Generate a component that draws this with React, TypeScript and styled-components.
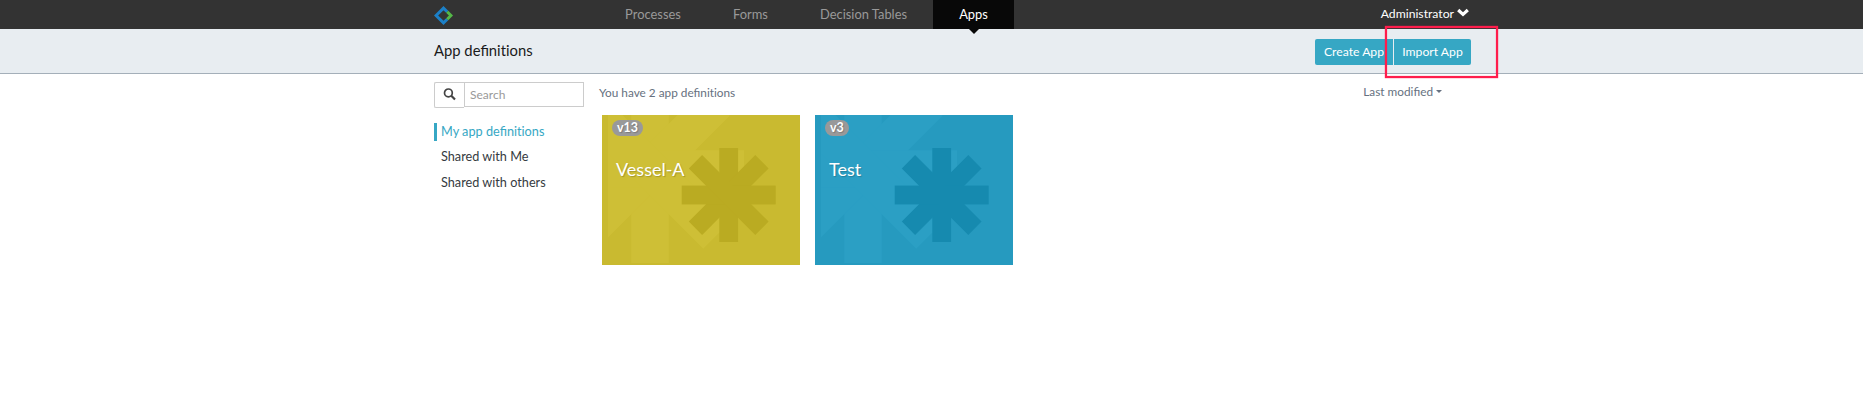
import React from "react";
import styled, { createGlobalStyle } from "styled-components";

const GlobalStyle = createGlobalStyle`
  * { box-sizing: border-box; }
  body {
    margin: 0;
    background: #fff;
    color: #333;
    font: 14px/20px Lato, "Liberation Sans", sans-serif;
  }
  button, input { font: inherit; }
`;

const Page = styled.div`
  position: relative;
  min-height: 402px;
`;

const Container = styled.div`
  width: 1037px;
  height: 100%;
  margin-left: 434px;
  display: flex;
`;

const TopBar = styled.header`
  height: 29px;
  background: #333;
`;

const Logo = styled.svg`
  width: 22px;
  height: 22px;
  margin: 5px 143px 0 0;
`;

const Nav = styled.nav`
  display: flex;
`;

const NavItem = styled.a<{ $width: number; $active?: boolean }>`
  position: relative;
  width: ${(p) => p.$width}px;
  height: 29px;
  line-height: 29px;
  text-align: center;
  font-size: 12.9px;
  color: ${(p) => (p.$active ? "#fff" : "#999")};
  background: ${(p) => (p.$active ? "#080808" : "transparent")};

  &::after {
    content: "";
    display: ${(p) => (p.$active ? "block" : "none")};
    position: absolute;
    top: 29px;
    left: calc(50% - 5px);
    border: 5px solid transparent;
    border-top-color: #080808;
    border-bottom: 0;
  }
`;

const Account = styled.div`
  display: flex;
  margin-left: auto;
  padding-right: 2px;
  font-size: 12.2px;
  line-height: 28px;
  color: #fff;
  gap: 3px;

  svg { margin-top: 8px; }
`;

const SubBar = styled.div`
  height: 45px;
  background: #e8edf1;
  border-bottom: 1px solid #a4afb9;
`;

const Title = styled.h2`
  margin: 0;
  font-size: 14.8px;
  font-weight: 400;
  line-height: 43px;
  color: #1a1a1a;
`;

const Plain = styled.span`
  font-variant-ligatures: none;
`;

const ButtonGroup = styled.div`
  display: flex;
  gap: 1px;
  margin: 10px 0 0 auto;
`;

const Button = styled.button<{ $side: "left" | "right" }>`
  width: ${(p) => (p.$side === "left" ? 78 : 77)}px;
  height: 26px;
  padding: 0;
  border: 0;
  border-radius: ${(p) => (p.$side === "left" ? "2px 0 0 2px" : "0 2px 2px 0")};
  background: #36a7c4;
  color: #fff;
  font-size: 12.2px;
`;

const Sidebar = styled.aside`
  width: 150px;
  padding-top: 8px;
`;

const SearchBox = styled.div`
  display: flex;
  height: 26px;
`;

const SearchIcon = styled.span`
  width: 30px;
  height: 26px;
  padding: 5px 0 0 8px;
  border: 1px solid #ccc;
  border-right: 0;
  border-radius: 2px 0 0 2px;

  svg { display: block; }
`;

const SearchInput = styled.input`
  flex: 1;
  min-width: 0;
  height: 25px;
  padding: 0 5px;
  border: 1px solid #ccc;
  font-size: 12px;
  outline: 0;

  &::placeholder { color: #999; opacity: 1; }
`;

const Filters = styled.ul`
  margin: 15px 0 0;
  padding: 0;
  list-style: none;
`;

const Filter = styled.li<{ $active?: boolean }>`
  height: 18px;
  margin-bottom: ${(p) => (p.$active ? 7 : 8)}px;
  padding-left: ${(p) => (p.$active ? 4 : 7)}px;
  border-left: ${(p) => (p.$active ? "3px solid #36a7c4" : "0")};
  font-size: 12.7px;
  line-height: 17px;
  color: ${(p) => (p.$active ? "#36a7c4" : "#363b41")};
`;

const Main = styled.main`
  flex: 1;
  padding: 9px 0 0 15px;
`;

const Summary = styled.div`
  display: flex;
  justify-content: space-between;
  height: 32px;
  padding-right: 29px;
  font-size: 11.8px;
  line-height: 19px;
  color: #667180;
`;

const Sort = styled.span`
  display: flex;
  align-items: center;
  height: 17px;
  gap: 3px;

  &::after {
    content: "";
    border: 3px solid transparent;
    border-top-color: currentColor;
    border-bottom: 0;
  }
`;

const Cards = styled.div`
  display: flex;
  gap: 15px;
  padding-left: 3px;
`;

const Card = styled.article<{ $color: string }>`
  position: relative;
  width: 198px;
  height: 150px;
  padding: 5px 10px;
  background: ${(p) => p.$color};
  color: #fff;
`;

const CardArt = styled.svg`
  position: absolute;
  inset: 0;
`;

const Badge = styled.span`
  position: relative;
  display: block;
  width: fit-content;
  height: 16px;
  padding: 0 5px;
  border-radius: 8px;
  background: #999;
  font-size: 12.4px;
  font-weight: 700;
  line-height: 16px;
  text-shadow: 1px 1px 1px rgba(0, 0, 0, 0.2);
`;

const CardTitle = styled.h3`
  position: relative;
  margin: 21px 4px 0;
  font-size: 18px;
  font-weight: 400;
  line-height: 24px;
  text-shadow: 1px 1px 1px rgba(0, 0, 0, 0.2);
`;

const Highlight = styled.div`
  position: absolute;
  left: 1385px;
  top: 26px;
  width: 113px;
  height: 52px;
  border: 2px solid #ff1d4c;
  box-shadow: 0 0 1px #ff1d4c, inset 0 0 1px #ff1d4c;
`;

const Asterisk = ({ x, y, size, fill }: { x: number; y: number; size: number; fill: string }) => (
  <g transform={`translate(${x} ${y})`} fill={fill}>
    {[0, 45, 90, 135].map((angle) => (
      <rect
        key={angle}
        x={-size / 10}
        y={-size / 2}
        width={size / 5}
        height={size}
        transform={`rotate(${angle})`}
      />
    ))}
  </g>
);

interface AppDefinition {
  name: string;
  version: number;
  color: string;
  light: string;
  dark: string;
}

const apps: AppDefinition[] = [
  { name: "Vessel-A", version: 13, color: "#c9ba30", light: "#cebf36", dark: "#baab22" },
  { name: "Test", version: 3, color: "#269abf", light: "#2b9fc4", dark: "#168aaf" },
];

const AppCard = ({ app }: { app: AppDefinition }) => (
  <Card $color={app.color}>
    <CardArt width="198" height="150">
      <svg x="6" y="0" width="192" height="148" viewBox="6 0 192 148">
        <Asterisk x={48} y={54} size={188} fill={app.light} />
      </svg>
      <Asterisk x={126.7} y={80} size={94} fill={app.dark} />
    </CardArt>
    <Badge>v{app.version}</Badge>
    <CardTitle>{app.name}</CardTitle>
  </Card>
);

export default function App() {
  return (
    <Page>
      <GlobalStyle />
      <TopBar>
        <Container>
          <Logo viewBox="0 0 22 22" fill="none" strokeWidth="3">
            <path d="M13.2 6.8 L9.5 3.1 L2.1 10.5 L9.5 17.9 L13.2 14.2" stroke="#1c80c7" />
            <path d="M13.2 6.8 L16.9 10.5 L13.2 14.2" stroke="#54b848" />
          </Logo>
          <Nav>
            <NavItem $width={108}>Processes</NavItem>
            <NavItem $width={87}>Forms</NavItem>
            <NavItem $width={139}>Decision Tables</NavItem>
            <NavItem $width={81} $active>Apps</NavItem>
          </Nav>
          <Account>
            Administrator
            <svg width="12" height="9" viewBox="0 0 12 9">
              <path d="M1.2 2 L6 6.4 L10.8 2" fill="none" stroke="#fff" strokeWidth="3.2" />
            </svg>
          </Account>
        </Container>
      </TopBar>
      <SubBar>
        <Container>
          <Title>App defi<Plain>nitions</Plain></Title>
          <ButtonGroup>
            <Button $side="left">Create App</Button>
            <Button $side="right">Import App</Button>
          </ButtonGroup>
        </Container>
      </SubBar>
      <Container>
        <Sidebar>
          <SearchBox>
            <SearchIcon>
              <svg width="13" height="13" viewBox="0 0 13 13" fill="none" stroke="#444">
                <circle cx="5.4" cy="4.9" r="3.9" strokeWidth="1.7" />
                <path d="M8.3 7.8 L12 11.5" strokeWidth="2.2" />
              </svg>
            </SearchIcon>
            <SearchInput placeholder="Search" />
          </SearchBox>
          <Filters>
            <Filter $active>My app defi<Plain>nitions</Plain></Filter>
            <Filter>Shared with Me</Filter>
            <Filter>Shared with others</Filter>
          </Filters>
        </Sidebar>
        <Main>
          <Summary>
            <span>You have 2 app defi<Plain>nitions</Plain></span>
            <Sort>Last modified</Sort>
          </Summary>
          <Cards>
            {apps.map((app) => (
              <AppCard key={app.name} app={app} />
            ))}
          </Cards>
        </Main>
      </Container>
      <Highlight />
    </Page>
  );
}
